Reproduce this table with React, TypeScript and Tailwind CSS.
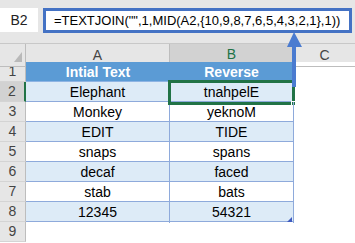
import React from "react";

const rows: [string, string][] = [
  ["Elephant", "tnahpelE"],
  ["Monkey", "yeknoM"],
  ["EDIT", "TIDE"],
  ["snaps", "spans"],
  ["decaf", "faced"],
  ["stab", "bats"],
  ["12345", "54321"],
];

const font = { fontFamily: '"Liberation Sans", Arial, sans-serif' };

function RowHead({ n, active }: { n: number; active?: boolean }) {
  return (
    <div
      className={
        "h-[20px] flex items-center justify-center text-[14px] text-[#444] border-b border-[#d4d4d4] " +
        (active
          ? "bg-[#d2d2d2] border-r-2 border-r-[#217346]"
          : "bg-[#e6e6e6] border-r border-r-[#bdbdbd]")
      }
    >
      {n}
    </div>
  );
}

export default function App() {
  return (
    <div className="relative w-[355px] h-[243px] overflow-hidden bg-white" style={font}>
      {/* formula bar */}
      <div className="h-[43px] bg-[#e6e6e6] pt-[8px] flex items-start">
        <div className="w-[38px] h-[24px] bg-white flex items-center justify-center text-[14px] text-[#222]">
          B2
        </div>
        <div className="ml-[5px] mr-[3px] flex-1 h-[25px] border-[3px] border-[#4472c4] bg-white flex items-center pl-[8px] text-[13px] text-black whitespace-nowrap">
          =TEXTJOIN("",1,MID(A2,{"{"}10,9,8,7,6,5,4,3,2,1{"}"},1))
        </div>
      </div>

      {/* column headers */}
      <div className="grid grid-cols-[26px_144px_124px_1fr] h-[19px] border-t border-[#c8c8c8] bg-[#e6e6e6] text-[14px] text-[#444]">
        <div className="relative border-r border-[#bdbdbd] border-b border-b-[#bdbdbd]">
          <svg className="absolute right-[3px] bottom-[4px]" width="8" height="10" viewBox="0 0 8 10">
            <polygon points="8,0 8,10 0,10" fill="#b9b9b9" />
          </svg>
        </div>
        <div className="flex items-center justify-center border-r border-[#bdbdbd] border-b border-b-[#bdbdbd]">A</div>
        <div className="flex items-center justify-center bg-[#d2d2d2] border-r border-[#bdbdbd] border-b-2 border-b-[#217346] text-[#217346]">
          B
        </div>
        <div className="flex items-center justify-center border-b border-b-[#bdbdbd]">C</div>
      </div>

      {/* sheet body */}
      <div className="grid grid-cols-[26px_268px_1fr]">
        <div className="flex flex-col">
          {[1, 2, 3, 4, 5, 6, 7, 8, 9].map((n) => (
            <RowHead key={n} n={n} active={n === 2} />
          ))}
        </div>

        <div className="flex flex-col">
          <div className="grid grid-cols-[144px_124px] h-[20px] bg-[#5b9bd5] text-white font-bold text-[14px] border-b border-[#8eb4e3]">
            <div className="flex items-center justify-center">Intial Text</div>
            <div className="flex items-center justify-center border-r border-[#8eaadb]">Reverse</div>
          </div>
          {rows.map(([a, b], i) => (
            <div
              key={a}
              className={
                "grid grid-cols-[144px_124px] h-[20px] text-[14px] text-black border-b border-[#8eaadb] " +
                (i % 2 === 0 ? "bg-[#ddebf7]" : "bg-white")
              }
            >
              <div className="flex items-center justify-center border-r border-[#8eaadb]">{a}</div>
              <div className="relative flex items-center justify-center border-r border-[#8eaadb]">
                {b}
                {i === 0 && (
                  <div className="absolute left-[-2px] top-[-2px] right-[-2px] bottom-[-2px] border-[3px] border-[#217346]">
                    <div className="absolute right-[-4px] bottom-[-4px] w-[5px] h-[5px] bg-[#217346] border border-white" />
                  </div>
                )}
                {i === rows.length - 1 && (
                  <svg className="absolute right-[1px] bottom-[1px]" width="5" height="5" viewBox="0 0 5 5">
                    <polygon points="5,0 5,5 0,5" fill="#3f5bbf" />
                  </svg>
                )}
              </div>
            </div>
          ))}
        </div>
        <div />
      </div>

      {/* arrow pointing at the formula */}
      <svg className="absolute left-0 top-0 pointer-events-none" width="355" height="243" viewBox="0 0 355 243">
        <polygon points="294,32 287,47 302,47" fill="#4a7bd0" />
        <rect x="292" y="46" width="4" height="41" fill="#4a7bd0" />
      </svg>
    </div>
  );
}
